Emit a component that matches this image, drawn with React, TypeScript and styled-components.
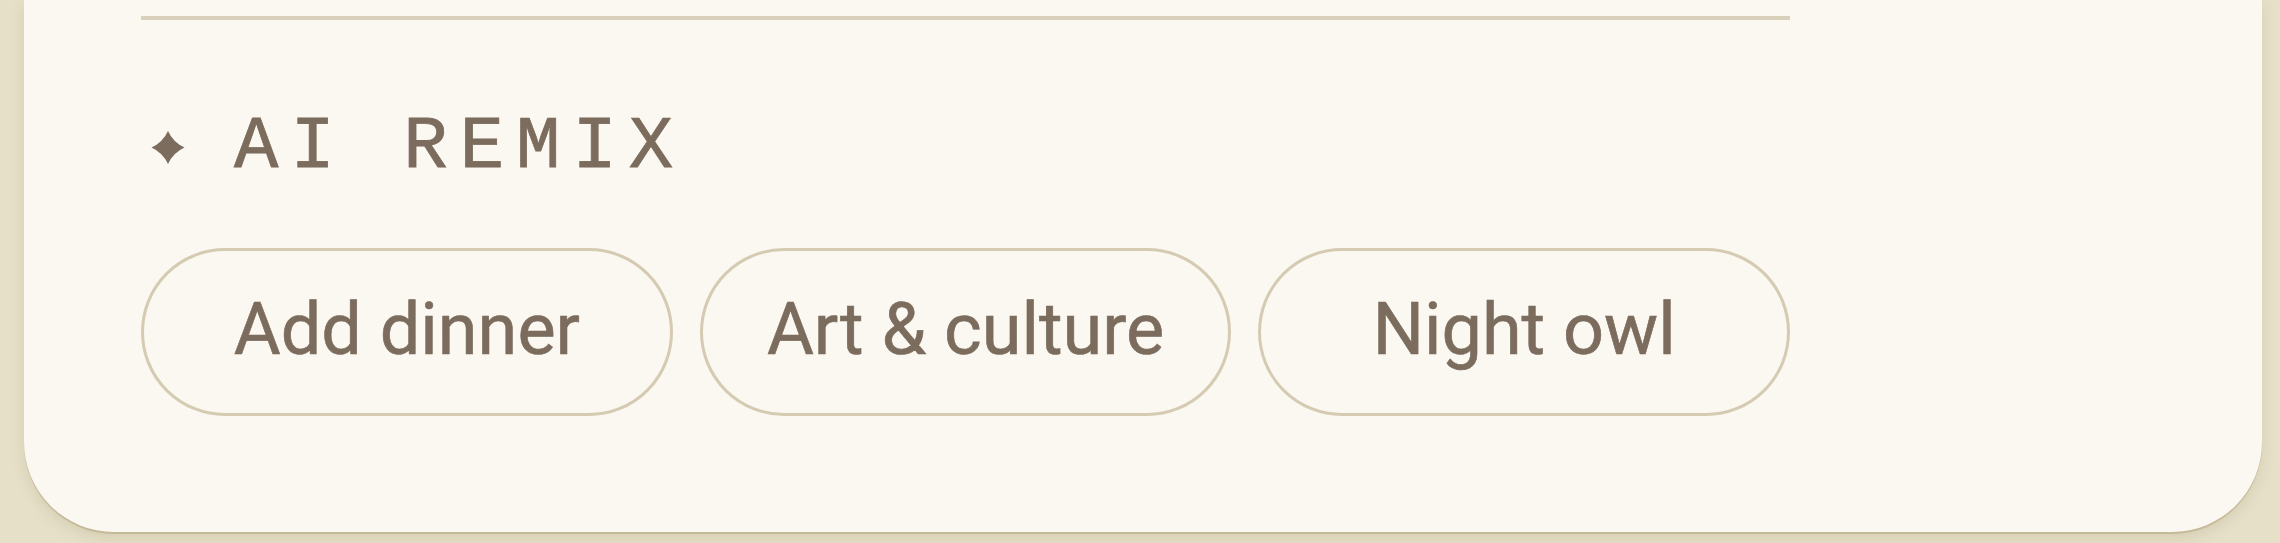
import styled, { createGlobalStyle } from "styled-components";

const GlobalStyle = createGlobalStyle`
    html, body {
        margin: 0;
        padding: 0;
        background: #e6e0c9;
        height: 543px;
        overflow: hidden;
    }
`;

const Page = styled.div`
    display: flex;
    padding: 0 18px 0 24px;
    height: 543px;
    box-sizing: border-box;
`;

const Card = styled.section`
    flex: 1;
    height: 532px;
    box-sizing: border-box;
    background: #fbf7f1;
    border-radius: 0 0 90px 90px;
    box-shadow: 0 2px 0 rgba(170, 158, 120, 0.45), 0 6px 14px rgba(140, 120, 70, 0.18);
    padding: 16px 0 0 117px;
`;

const Column = styled.div`
    width: 1649px;
    display: flex;
    flex-direction: column;
`;

const Divider = styled.hr`
    margin: 0;
    border: none;
    height: 4px;
    background: #d8d0ba;
`;

const Heading = styled.h2`
    margin: 91px 0 0;
    display: flex;
    align-items: center;
    height: 72px;
    font-family: "Liberation Mono", monospace;
    font-weight: 400;
    font-size: 74px;
    letter-spacing: 12px;
    color: #7b6c5d;
    -webkit-text-stroke: 0.8px #7b6c5d;
`;

const Sparkle = styled.svg`
    width: 34px;
    height: 33px;
    margin: 0 49px 0 10px;
    flex: none;
`;

const Chips = styled.div`
    display: flex;
    gap: 27px;
    margin-top: 65px;
`;

const Chip = styled.button`
    flex: 1;
    height: 168px;
    border: 3.5px solid #d4cbb2;
    border-radius: 84px;
    background: transparent;
    font-family: Roboto, "Liberation Sans", sans-serif;
    font-size: 72px;
    color: #7b6c5d;
    -webkit-text-stroke: 0.6px #7b6c5d;
    display: flex;
    align-items: center;
    justify-content: center;
    padding: 0 0 6px;
    cursor: pointer;
`;

const remixes = ["Add dinner", "Art & culture", "Night owl"];

function App() {
    return (
        <>
            <GlobalStyle />
            <Page>
                <Card>
                    <Column>
                        <Divider />
                        <Heading>
                            <Sparkle viewBox="0 0 32 32">
                                <path
                                    d="M16 0 Q21 11 32 16 Q21 21 16 32 Q11 21 0 16 Q11 11 16 0Z"
                                    fill="#7b6c5d"
                                />
                            </Sparkle>
                            AI REMIX
                        </Heading>
                        <Chips>
                            {remixes.map((label) => (
                                <Chip key={label}>{label}</Chip>
                            ))}
                        </Chips>
                    </Column>
                </Card>
            </Page>
        </>
    );
}

export default App;
